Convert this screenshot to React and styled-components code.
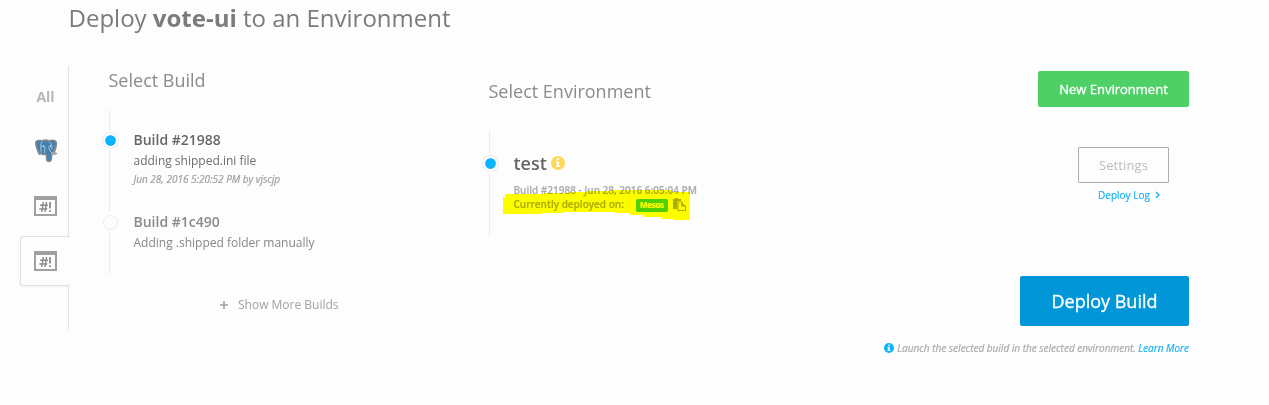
import React from "react";
import styled, { createGlobalStyle } from "styled-components";

const Global = createGlobalStyle`
  * { box-sizing: border-box; }
  body { margin: 0; background: #fdfdfd; font-family: "Open Sans", "Noto Sans", sans-serif; color: #888; }
  h1, h2, h3, p, ul { margin: 0; padding: 0; font-weight: 400; }
  button { font-family: inherit; padding: 0; cursor: pointer; }
  a { color: #1db4fb; text-decoration: none; }
`;

const Page = styled.main`
  width: 1269px;
  height: 405px;
  overflow: hidden;
  white-space: nowrap;
`;

const Title = styled.h1`
  height: 66px;
  padding: 1px 0 0 68.5px;
  font-size: 24px;
  line-height: 33px;
  color: #7b7b7b;
  b { font-weight: 700; }
`;

const Body = styled.div`
  display: flex;
  align-items: flex-start;
`;

const Sidebar = styled.nav`
  display: flex;
  flex-direction: column;
  gap: 5px;
  width: 69px;
  height: 265px;
  padding: 5px 0 0 20px;
  border-right: 1px solid #e4e4e4;
`;

const Tab = styled.div`
  display: flex;
  align-items: center;
  justify-content: center;
  flex: none;
  width: 50px;
  height: 50px;
  font-size: 14px;
  font-weight: 700;
  color: #b8b8b8;
  border: 1px solid ${(p) => (p.$active ? "#e2e2e2" : "transparent")};
  border-right: 0;
  border-radius: 3px 0 0 3px;
  background: ${(p) => (p.$active ? "#fdfdfd" : "none")};
  box-shadow: ${(p) => (p.$active ? "-1px 1px 2px rgba(0,0,0,0.05)" : "none")};
`;

const Column = styled.section`
  width: ${(p) => p.$width}px;
  padding: ${(p) => p.$top}px 0 0 40px;
`;

const Heading = styled.h2`
  margin-left: -0.5px;
  font-size: 18px;
  line-height: 24px;
  color: #8c8c8c;
`;

const Timeline = styled.ul`
  list-style: none;
  height: ${(p) => p.$height}px;
  margin-top: ${(p) => p.$gap}px;
  padding: 20px 0 0 23.5px;
  border-left: 1px solid #ebebeb;
`;

const Entry = styled.li`
  position: relative;
  height: 82px;
`;

const Marker = styled.span`
  position: absolute;
  left: -31px;
  top: ${(p) => p.$top}px;
  width: 15px;
  height: 15px;
  border-radius: 50%;
  border: ${(p) => (p.$on ? "2px solid #fdfdfd" : "1px solid #ebebeb")};
  background: ${(p) => (p.$on ? "#0cb3ff" : "#fdfdfd")};
  background-clip: padding-box;
  box-shadow: ${(p) => (p.$on ? "0 0 0 1px #ebebeb, 0 0 0 3px #fdfdfd" : "0 0 0 3px #fdfdfd")};
`;

const BuildName = styled.h3`
  font-size: 14px;
  font-weight: 600;
  line-height: 20px;
  color: ${(p) => (p.$on ? "#666" : "#8a8a8a")};
`;

const Message = styled.p`
  font-size: 12px;
  line-height: 21px;
  color: ${(p) => (p.$on ? "#6e6e6e" : "#878787")};
`;

const Stamp = styled.p`
  font-size: 10px;
  font-style: italic;
  line-height: 17px;
  color: #a0a0a0;
  -webkit-text-stroke: 0.2px currentColor;
`;

const ShowMore = styled.div`
  display: flex;
  align-items: center;
  gap: 9px;
  margin: 21px 0 0 110px;
  font-size: 12px;
  line-height: 20px;
  color: #a3a3a3;
`;

const EnvName = styled.h3`
  display: flex;
  align-items: center;
  gap: 4px;
  height: 26px;
  font-size: 18px;
  font-weight: 600;
  color: #666;
`;

const EnvDetail = styled.p`
  display: flex;
  align-items: center;
  height: 14px;
  font-size: 10px;
  font-weight: 600;
  color: #adadad;
  -webkit-text-stroke: 0.2px currentColor;
`;

const Details = styled.div`
  margin-top: 7px;
`;

const Badge = styled.span`
  width: 32px;
  height: 13px;
  margin: 2px 5px 0 12px;
  border-radius: 2px;
  background: #4fd067;
  font-size: 8px;
  font-weight: 700;
  letter-spacing: -0.3px;
  line-height: 12px;
  text-align: center;
  color: #fff;
`;

const Highlight = styled.svg`
  position: absolute;
  left: -10.5px;
  top: 39px;
  mix-blend-mode: multiply;
`;

const Actions = styled.aside`
  display: flex;
  flex-direction: column;
  align-items: flex-end;
  width: 340px;
  margin-left: auto;
  margin-right: 80px;
  padding-top: 5px;
`;

const Button = styled.button`
  width: ${(p) => p.$w}px;
  height: ${(p) => p.$h}px;
  border: 0;
  border-radius: 2px;
  background: ${(p) => p.$bg};
  color: #fff;
  font-size: ${(p) => p.$size}px;
  -webkit-text-stroke: 0.3px currentColor;
`;

const EnvActions = styled.div`
  display: flex;
  flex-direction: column;
  align-items: center;
  margin: 40px 20px 0 0;
`;

const OutlineButton = styled.button`
  width: 91px;
  height: 36px;
  border: 1px solid #adadad;
  border-radius: 1px;
  background: transparent;
  color: #bcbcbc;
  font-size: 13px;
  letter-spacing: 0.1px;
`;

const LogLink = styled.a`
  display: flex;
  align-items: center;
  gap: 5px;
  height: 14px;
  margin: 5px 0 74px 11px;
  font-size: 10px;
  -webkit-text-stroke: 0.2px currentColor;
`;

const Hint = styled.p`
  display: flex;
  align-items: center;
  gap: 3px;
  margin-top: 14px;
  height: 15px;
  font-size: 10px;
  font-style: italic;
  color: #aaa;
  -webkit-text-stroke: 0.2px currentColor;
`;

const InfoIcon = ({ size, color }) => (
  <svg width={size} height={size} viewBox="0 0 14 14">
    <circle cx="7" cy="7" r="7" fill={color} />
    <path d="M5.8 2.3h2.3v2H5.8zM5 5.6h3.1v3.9H9v1.6H5V9.500h.9V7.100H5z" fill="#fff" />
  </svg>
);

const PostgresIcon = () => (
  <svg width="24" height="24" viewBox="0 0 24 24">
    <path d="M1 3C2 0 6 .6 8 1c3-1 5-.7 7 0 3-1 7-1 8 2 .6 3-.5 7-2 10.500l2.500.5c-1 1.700-3 2-5 1.800L18 21c-.8 2.700-5 3-6 .5L11.500 16c-2 .7-3.500.5-4.500-.4C5 17 4 15 3 12 2 9 .6 6 1 3z" fill="#8d8d8d" />
    <path d="M2.500 3.500C3.500 1.600 6 2 8 2.300c3-1 5-.7 7 0 2.500-.9 6-.7 6.700 1.200.4 2.500-1.200 6.700-3.200 9.500l-1.200 1-.6 6.500c-.5 1.700-3 1.700-3.500.3l-.7-6.500c-2 1-3.700.7-4.700-.5C5 15.300 2 7 2.500 3.500z" fill="#4580ad" />
    <path d="M8 2.500C6.500 5 6.500 10 7.300 13.500M7 7.500c2-1.200 4-.7 4 1.200 0 2-.5 3-.3 5.300M15 2.500c2.500 2 3.500 5 2.700 7.700M17.500 7c-2-.8-3 .5-2.500 2.200.3 1.800 1.500 2.800 2 4.300M17 14l4 .4" fill="none" stroke="#b4c8d8" strokeWidth="0.900" />
    <path d="M9 7.500h1M16.200 7.200h1" stroke="#fff" />
  </svg>
);

const ScriptIcon = () => (
  <svg width="23" height="20" viewBox="0 0 23 20">
    <path d="M0 0h23v20H0zM2 4v14h19V4z" fill="#a0a0a0" fillRule="evenodd" />
    <path d="M9.300 6 7.800 16M12.500 6 11 16M6 9.200h8M5.300 13h8" fill="none" stroke="#8c8c8c" strokeWidth="1.500" />
    <path d="M16 6v6.500M16 14.200v1.800" fill="none" stroke="#8c8c8c" strokeWidth="1.800" />
  </svg>
);

const CopyIcon = () => (
  <svg width="13" height="13" viewBox="0 0 13 13">
    <path d="M0 1h2V0h3v1h3v2H4v8H0z" fill="#adadad" />
    <path d="M5 4h4v4h3.500v4.500H5z" fill="#fdfdfd" stroke="#adadad" strokeWidth="1.200" />
    <path d="M8.500 4 12.500 8h-4z" fill="#adadad" />
  </svg>
);

export default function App() {
  return (
    <Page>
      <Global />
      <Title>Deploy <b>vote-ui</b> to an Environment</Title>
      <Body>
        <Sidebar>
          <Tab>All</Tab>
          <Tab><PostgresIcon /></Tab>
          <Tab><ScriptIcon /></Tab>
          <Tab $active><ScriptIcon /></Tab>
        </Sidebar>
        <Column $width={380} $top={2}>
          <Heading>Select Build</Heading>
          <Timeline $gap={18} $height={164}>
            <Entry>
              <Marker $on $top={2.5} />
              <BuildName $on>Build #21988</BuildName>
              <Message $on>adding shipped.ini file</Message>
              <Stamp>Jun 28, 2016 5:20:52 PM by vjscjp</Stamp>
            </Entry>
            <Entry>
              <Marker $top={2.5} />
              <BuildName>Build #1c490</BuildName>
              <Message>Adding .shipped folder manually</Message>
            </Entry>
          </Timeline>
          <ShowMore>
            <svg width="10" height="10" viewBox="0 0 10 10"><path d="M5 1v8M1 5h8" stroke="#a3a3a3" strokeWidth="1.600" /></svg>
            Show More Builds
          </ShowMore>
        </Column>
        <Column $width={320} $top={13}>
          <Heading>Select Environment</Heading>
          <Timeline $gap={27} $height={106}>
            <Entry>
              <Marker $on $top={5.5} />
              <EnvName>test <InfoIcon size={14} color="#ffd857" /></EnvName>
              <Details>
                <EnvDetail>Build #21988 - Jun 28, 2016 6:05:04 PM</EnvDetail>
                <EnvDetail>Currently deployed on:<Badge>Mesos</Badge><CopyIcon /></EnvDetail>
              </Details>
              <Highlight width="188" height="32" viewBox="0 0 188 32">
                <path d="M0 8h2V5h39V4h25V3h18V2h24V1h61v2h18v28h-16v-1h-12v-2h-18v-2h-14v-2h-15v-1H61v1H39v1H0z" fill="#ff0" />
              </Highlight>
            </Entry>
          </Timeline>
        </Column>
        <Actions>
          <Button $w={151} $h={36} $bg="#4fd067" $size={13}>New Environment</Button>
          <EnvActions>
            <OutlineButton>Settings</OutlineButton>
            <LogLink>Deploy Log
              <svg width="5" height="8" viewBox="0 0 5 8"><path d="M1 1l3 3-3 3" fill="none" stroke="#1db4fb" strokeWidth="1.400" /></svg>
            </LogLink>
          </EnvActions>
          <Button $w={169} $h={50} $bg="#0096d8" $size={18}>Deploy Build</Button>
          <Hint>
            <InfoIcon size={10} color="#0cb3ff" />
            <span>Launch the selected build in the selected environment. <a>Learn More</a></span>
          </Hint>
        </Actions>
      </Body>
    </Page>
  );
}
